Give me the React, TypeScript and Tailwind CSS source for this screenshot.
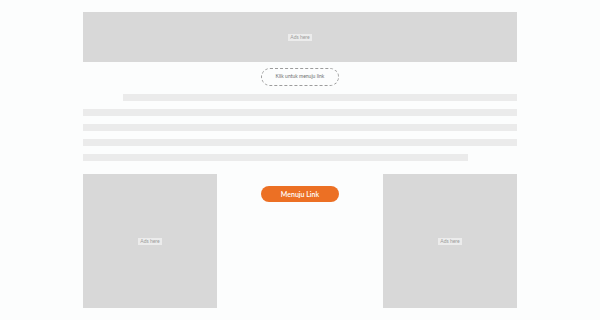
import React from "react";

function AdLabel() {
  return (
    <span className="bg-[#ececec] px-[2px] text-[5px] leading-[7px] text-[#9a9a9a]">
      Ads here
    </span>
  );
}

export default function App() {
  const lines = [
    "ml-[40px]",
    "",
    "",
    "",
    "w-[385px]",
  ];

  return (
    <div className="min-h-[320px] w-[600px] bg-[#fcfdfd] font-['Lato',sans-serif]">
      <div className="mx-auto flex w-[434px] flex-col pt-[12px]">
        <div className="flex h-[50px] items-center justify-center bg-[#d8d8d8]">
          <AdLabel />
        </div>

        <div className="mt-[6px] flex justify-center">
          <button className="flex h-[18px] w-[78px] items-center justify-center rounded-full border border-dashed border-[#9c9c9c] text-[5px] text-[#6d6d6d]">
            Klik untuk menuju link
          </button>
        </div>

        <div className="mt-[8px] flex flex-col gap-[8px]">
          {lines.map((cls, i) => (
            <div key={i} className={"h-[7px] bg-[#ebebeb] " + cls} />
          ))}
        </div>

        <div className="mt-[13px] flex justify-between">
          <div className="flex h-[134px] w-[134px] items-center justify-center bg-[#d8d8d8]">
            <AdLabel />
          </div>
          <div className="flex flex-col pt-[12px]">
            <button className="flex h-[16px] w-[78px] items-center justify-center rounded-full bg-[#ec7024] text-[7px] font-semibold text-white">
              Menuju Link
            </button>
          </div>
          <div className="flex h-[134px] w-[134px] items-center justify-center bg-[#d8d8d8]">
            <AdLabel />
          </div>
        </div>
      </div>
    </div>
  );
}
